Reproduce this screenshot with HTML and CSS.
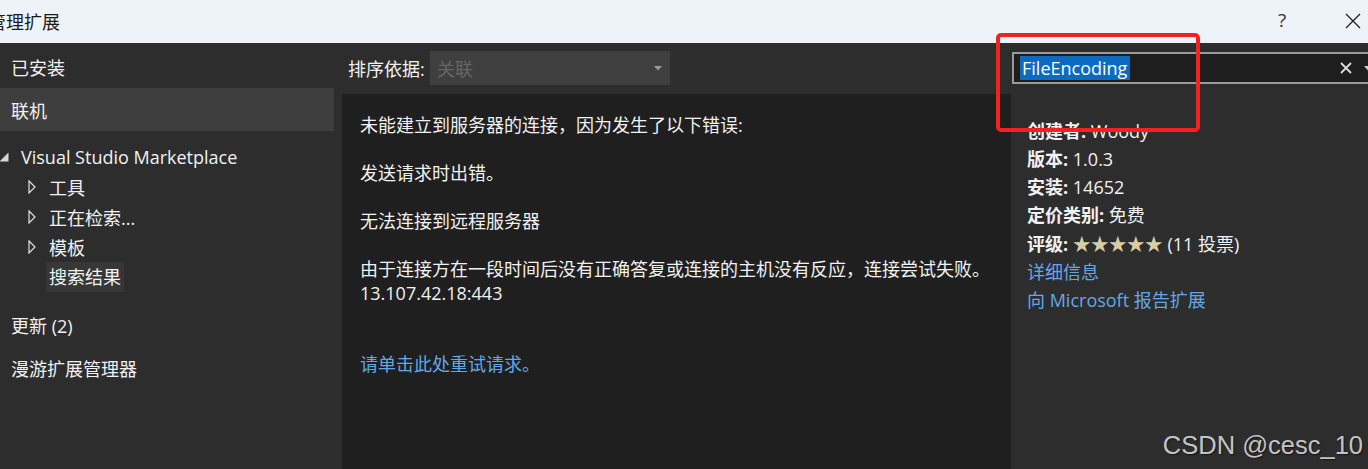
FILE: index.html
```html
<!DOCTYPE html>
<html lang="zh-CN">
<head>
<meta charset="utf-8">
<title>管理扩展</title>
<link rel="stylesheet" href="styles.css">
</head>
<body>
<div class="window">
  <header class="titlebar">
    <span class="title">管理扩展</span>
    <div class="title-actions">
      <span class="help">?</span>
      <span class="close">
        <svg width="16" height="16" viewBox="0 0 16 16"><path d="M1 1 L15 15 M15 1 L1 15" stroke="#1f1f1f" stroke-width="1.3" fill="none"/></svg>
      </span>
    </div>
  </header>
  <div class="main">
    <nav class="sidebar">
      <div class="nav-item installed">已安装</div>
      <div class="nav-item online">联机</div>
      <div class="tree">
        <div class="tree-row tree-root">
          <svg class="glyph-expanded" width="10" height="10" viewBox="0 0 10 10"><polygon points="9.5,0.5 9.5,9.5 0.5,9.5" fill="#d6d6d6"/></svg>
          <span>Visual Studio Marketplace</span>
        </div>
        <div class="tree-row tree-child">
          <svg class="glyph-collapsed" width="8" height="14" viewBox="0 0 8 14"><polygon points="1,1 7,7 1,13" fill="none" stroke="#e0e0e0" stroke-width="1.2"/></svg>
          <span>工具</span>
        </div>
        <div class="tree-row tree-child">
          <svg class="glyph-collapsed" width="8" height="14" viewBox="0 0 8 14"><polygon points="1,1 7,7 1,13" fill="none" stroke="#e0e0e0" stroke-width="1.2"/></svg>
          <span>正在检索...</span>
        </div>
        <div class="tree-row tree-child">
          <svg class="glyph-collapsed" width="8" height="14" viewBox="0 0 8 14"><polygon points="1,1 7,7 1,13" fill="none" stroke="#e0e0e0" stroke-width="1.2"/></svg>
          <span>模板</span>
        </div>
        <div class="tree-row tree-child">
          <span class="leaf-spacer"></span>
          <span class="leaf-selected">搜索结果</span>
        </div>
      </div>
      <div class="nav-item updates">更新 (2)</div>
      <div class="nav-item">漫游扩展管理器</div>
    </nav>

    <section class="center">
      <div class="sortbar">
        <span class="sort-label">排序依据:</span>
        <div class="combo">
          <span class="combo-value">关联</span>
          <svg width="8" height="5" viewBox="0 0 8 5"><polygon points="0,0 8,0 4,4.5" fill="#9a9a9a"/></svg>
        </div>
      </div>
      <div class="results">
        <p>未能建立到服务器的连接，因为发生了以下错误:</p>
        <p>发送请求时出错。</p>
        <p>无法连接到远程服务器</p>
        <p>由于连接方在一段时间后没有正确答复或连接的主机没有反应，连接尝试失败。<br>13.107.42.18:443</p>
        <p class="retry"><a class="link">请单击此处重试请求。</a></p>
      </div>
    </section>

    <aside class="details">
      <div class="search">
        <span class="search-text"><span class="selection">FileEncoding</span></span>
        <svg class="clear" width="12" height="12" viewBox="0 0 12 12"><path d="M1 1 L11 11 M11 1 L1 11" stroke="#dcdcdc" stroke-width="1.8" fill="none"/></svg>
        <svg class="drop" width="8" height="5" viewBox="0 0 8 5"><polygon points="0,0 8,0 4,4.5" fill="#cfcfcf"/></svg>
      </div>
      <div class="info">
        <div class="info-row"><b>创建者:</b> Woody</div>
        <div class="info-row"><b>版本:</b> 1.0.3</div>
        <div class="info-row"><b>安装:</b> 14652</div>
        <div class="info-row"><b>定价类别:</b> 免费</div>
        <div class="info-row"><b>评级:</b> <span class="stars">★★★★★</span> (11 投票)</div>
        <div class="info-row"><a class="link">详细信息</a></div>
        <div class="info-row"><a class="link">向 Microsoft 报告扩展</a></div>
      </div>
    </aside>
  </div>

  <div class="annotation"></div>
  <div class="watermark">CSDN @cesc_10</div>
</div>
</body>
</html>
```

FILE: styles.css
```css
html, body {
  margin: 0;
  padding: 0;
  background: #2d2d2d;
}

.window {
  position: relative;
  width: 1368px;
  height: 469px;
  overflow: hidden;
  font-family: "Open Sans", "Noto Sans CJK SC", sans-serif;
  font-size: 18px;
  color: #f1f1f1;
}

/* title bar */
.titlebar {
  height: 43px;
  background: #eef2f9;
  display: flex;
  align-items: center;
  justify-content: space-between;
  color: #1a1a1a;
}

.title {
  margin-left: -12px;
  line-height: 1;
}

.title-actions {
  display: flex;
  align-items: center;
  gap: 46px;
}

.help {
  width: 20px;
  text-align: center;
  color: #333333;
  font-size: 19px;
  line-height: 1;
  margin-top: -2px;
}

.close {
  width: 30px;
  display: flex;
  align-items: center;
  justify-content: center;
  margin-top: -2px;
}

/* main grid */
.main {
  display: grid;
  grid-template-columns: 334px 677px 357px;
  height: 426px;
}

/* sidebar */
.sidebar {
  background: #2d2d2d;
}

.nav-item {
  height: 43px;
  display: flex;
  align-items: center;
  padding-left: 11px;
  box-sizing: border-box;
}

.installed {
  height: 45px;
  padding-top: 3px;
}

.online {
  background: #3e3e3e;
}

.tree {
  padding-top: 11px;
}

.tree-row {
  height: 30px;
  display: flex;
  align-items: center;
}

.tree-root {
  gap: 12px;
  margin-left: -1px;
}

.tree-child {
  padding-left: 28px;
  gap: 13px;
}

.leaf-spacer {
  width: 8px;
}

.leaf-selected {
  background: #373737;
  height: 30px;
  line-height: 30px;
  padding: 0 3px;
  margin-left: -3px;
}

.updates {
  margin-top: 11px;
}

/* center */
.center {
  display: flex;
  flex-direction: column;
}

.sortbar {
  margin-top: 8px;
  height: 34px;
  display: flex;
  align-items: center;
  padding-left: 14px;
}

.sort-label {
  width: 82px;
  flex: none;
}

.combo {
  width: 240px;
  height: 34px;
  background: #3f3f3f;
  display: flex;
  align-items: center;
  justify-content: space-between;
  padding: 0 8px 0 7px;
  box-sizing: border-box;
}

.combo-value {
  color: #666666;
}

.results {
  flex: 1;
  margin-top: 9px;
  margin-left: 8px;
  background: #1f1f1f;
  padding: 19px 18px;
}

.results p {
  margin: 0 0 24px;
  line-height: 24px;
}

.results .retry {
  margin-top: 47px;
}

.link {
  color: #62a8e8;
  cursor: pointer;
}

/* details */
.details {
  overflow: hidden;
  padding-left: 1px;
}

.search {
  margin-top: 9px;
  width: 384px;
  height: 32px;
  box-sizing: border-box;
  border: 2px solid #9a9a9a;
  background: #1e1e1e;
  display: flex;
  align-items: center;
  padding: 0 22px 0 6px;
}

.search-text {
  flex: 1;
  display: flex;
}

.selection {
  background: #0c6bc0;
  color: #ffffff;
  line-height: 24px;
  height: 24px;
  padding: 0 3px 0 2px;
}

.drop {
  margin-left: 12px;
}

.info {
  margin-top: 33px;
  padding-left: 15px;
}

.info-row {
  line-height: 28px;
  white-space: nowrap;
}

.info-row b {
  font-weight: 700;
}

.stars {
  font-family: "Noto Sans CJK SC", sans-serif;
  color: #dccca4;
}

/* overlays */
.annotation {
  position: absolute;
  left: 996px;
  top: 33px;
  width: 204px;
  height: 99px;
  box-sizing: border-box;
  border: 4px solid #f52020;
  border-radius: 5px;
}

.watermark {
  position: absolute;
  right: 5px;
  bottom: 10px;
  font-family: "Liberation Sans", Arial, sans-serif;
  font-size: 25.5px;
  line-height: 28px;
  color: #c4c4c4;
  text-shadow: 1px 1px 1px #151515;
}
```
